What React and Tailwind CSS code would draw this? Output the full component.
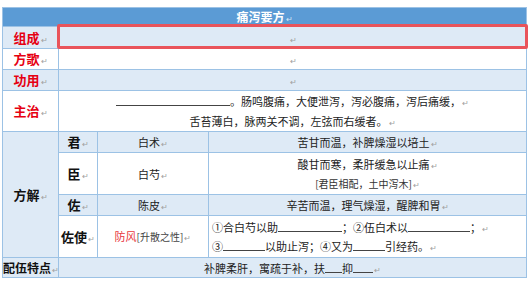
const Mark = ({ light }) => (
  <span className={`ml-px inline-block text-[8px] leading-[8px] font-normal ${light ? "text-[#d6e6f5]" : "text-[#a0a0a0]"}`}>↵</span>
);

const Blank = ({ w }) => <span className={`inline-block h-[10px] border-b border-[#444] ${w}`} />;

const cell = "border border-[#9cc2e5] p-0";
const label = `${cell} whitespace-nowrap text-center font-bold text-[13px] leading-[16px] text-[#e60012]`;
const blackLabel = `${cell} whitespace-nowrap text-center font-bold text-[13px] leading-[16px] text-[#111]`;
const body = `${cell} text-center text-[11px] leading-[16px] text-[#222]`;
const body2 = `${cell} text-center text-[11px] leading-[20px] text-[#222]`;

export default function App() {
  return (
    <div className="w-[530px] h-[283px] overflow-hidden bg-white pt-[7px] pl-[2px] font-['Noto_Sans_CJK_SC',sans-serif] leading-[16px]">
      <div className="relative w-[524px]">
        <table className="w-[524px] table-fixed border-collapse">
          <colgroup>
            <col className="w-[56px]" />
            <col className="w-[39px]" />
            <col className="w-[111px]" />
            <col className="w-[318px]" />
          </colgroup>
          <tbody>
            <tr className="h-[19px] bg-[#5b9bd5]">
              <td colSpan={4} className="border border-[#9cc2e5] p-0 text-center text-[12px] leading-[16px] font-bold text-white">
                痛泻要方<Mark light />
              </td>
            </tr>
            <tr className="h-[22px] bg-[#deeaf6]">
              <td className={label}>组成<Mark /></td>
              <td colSpan={3} className={body}><Mark /></td>
            </tr>
            <tr className="h-[21px] bg-white">
              <td className={label}>方歌<Mark /></td>
              <td colSpan={3} className={body}><Mark /></td>
            </tr>
            <tr className="h-[21px] bg-[#deeaf6]">
              <td className={label}>功用<Mark /></td>
              <td colSpan={3} className={body}><Mark /></td>
            </tr>
            <tr className="h-[41px] bg-white">
              <td className={label}>主治<Mark /></td>
              <td colSpan={3} className={body2}>
                <div>
                  <Blank w="w-[114px]" />。肠鸣腹痛，大便泄泻，泻必腹痛，泻后痛缓，<Mark />
                </div>
                <div>舌苔薄白，脉两关不调，左弦而右缓者。<Mark /></div>
              </td>
            </tr>
            <tr className="h-[21px] bg-[#deeaf6]">
              <td rowSpan={4} className={`${blackLabel} bg-[#deeaf6]`}>方解<Mark /></td>
              <td className={blackLabel}>君<Mark /></td>
              <td className={body}>白术<Mark /></td>
              <td className={body}>苦甘而温，补脾燥湿以培土<Mark /></td>
            </tr>
            <tr className="h-[42px] bg-white">
              <td className={blackLabel}>臣<Mark /></td>
              <td className={body}>白芍<Mark /></td>
              <td className={body2}>
                <div>酸甘而寒，柔肝缓急以止痛<Mark /></div>
                <div className="text-[10px] text-[#333]">[君臣相配，土中泻木]<Mark /></div>
              </td>
            </tr>
            <tr className="h-[21px] bg-[#deeaf6]">
              <td className={blackLabel}>佐<Mark /></td>
              <td className={body}>陈皮<Mark /></td>
              <td className={body}>辛苦而温，理气燥湿，醒脾和胃<Mark /></td>
            </tr>
            <tr className="h-[42px] bg-white">
              <td className={blackLabel}>佐使<Mark /></td>
              <td className={`${body} whitespace-nowrap`}>
                <span className="text-[#e8383d]">防风</span>
                <span className="text-[10px] text-[#444]">[升散之性]</span>
                <Mark />
              </td>
              <td className={`${cell} pl-[3px] text-left text-[11px] leading-[19px] text-[#222]`}>
                <div>
                  ①合白芍以助<Blank w="w-[64px]" />；②伍白术以<Blank w="w-[62px]" />；<Mark />
                </div>
                <div>
                  ③<Blank w="w-[42px]" />以助止泻；④又为<Blank w="w-[32px]" />引经药。<Mark />
                </div>
              </td>
            </tr>
            <tr className="h-[20px] bg-[#deeaf6]">
              <td className={`${cell} whitespace-nowrap text-center text-[12px] leading-[16px] font-bold text-[#111]`}>配伍特点<Mark /></td>
              <td colSpan={3} className={body}>
                补脾柔肝，寓疏于补，扶<Blank w="w-[17px]" />抑<Blank w="w-[20px]" /><Mark />
              </td>
            </tr>
          </tbody>
        </table>
        <div className="pointer-events-none absolute left-[55px] top-[17px] h-[25px] w-[471px] rounded-[2px] border-[3px] border-[#e9545b]" />
      </div>
    </div>
  );
}
